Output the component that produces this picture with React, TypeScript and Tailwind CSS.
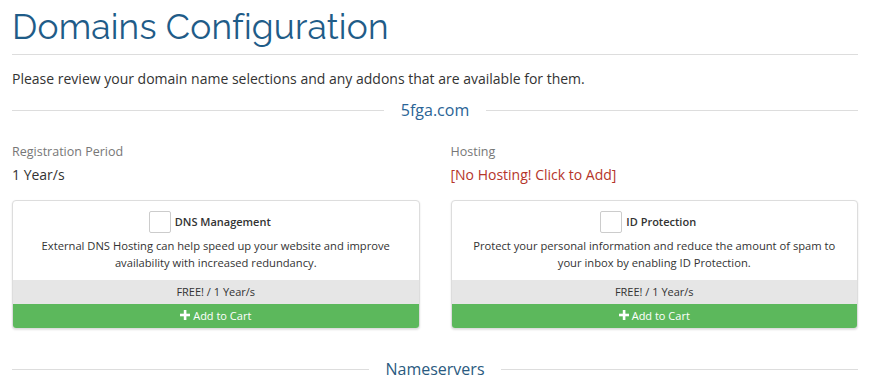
import React from "react";

function Plus() {
  return (
    <svg width="10" height="10" viewBox="0 0 10 10" className="inline-block mr-[3px] -mt-[2px]">
      <rect x="3.8" y="0" width="2.6" height="10" fill="white" />
      <rect x="0" y="3.7" width="10" height="2.6" fill="white" />
    </svg>
  );
}

function AddonCard({ title, desc }: { title: string; desc: React.ReactNode }) {
  return (
    <div className="h-[129px] border border-[#dddddd] rounded-[4px] shadow-[0_1px_2px_rgba(0,0,0,0.12)] overflow-hidden flex flex-col bg-white">
      <div className="flex-1 flex flex-col items-center pt-[10px]">
        <div className="flex items-center h-[22px] -ml-[12px]">
          <span className="w-[22px] h-[22px] border border-[#cccccc] rounded-[2px] bg-white mr-[4px]" />
          <span className="text-[11px] font-semibold text-[#333333]">{title}</span>
        </div>
        <div className="mt-[4px] text-[11.2px] leading-[17px] text-[#333333] text-center px-[16px]">{desc}</div>
      </div>
      <div className="h-[24px] bg-[#e6e6e6] text-[11px] text-[#333333] flex items-center justify-center">FREE! / 1 Year/s</div>
      <div className="h-[24px] bg-[#5cb85c] text-[11px] text-white flex items-center justify-center">
        <Plus />Add to Cart
      </div>
    </div>
  );
}

export default function App() {
  return (
    <div className="w-[882px] h-[386px] bg-white overflow-hidden pl-[12px] pr-[24px] pt-[2px] font-['Open_Sans',sans-serif] text-[#333333]">
      <div className="h-[53px] border-b border-[#dddddd]">
        <h1 className="font-['Raleway','Lato',sans-serif] text-[35.3px] leading-[44px] pt-[3px] text-[#1f5c88] font-normal tracking-[0.2px]">
          Domains Configuration
        </h1>
      </div>
      <p className="mt-[14px] text-[14px] leading-[20px] text-[#333333]">
        Please review your domain name selections and any addons that are available for them.
      </p>
      <div className="mt-[9px] flex items-center h-[24px]">
        <div className="flex-1 border-t border-[#dddddd]" />
        <div className="px-[17px] text-[16px] text-[#2a6496] leading-[24px]">5fga.com</div>
        <div className="flex-1 border-t border-[#dddddd]" />
      </div>
      <div className="mt-[20px] grid grid-cols-2 gap-x-[31px]">
        <div>
          <div className="text-[12.5px] leading-[20px] text-[#777777]">Registration Period</div>
          <div className="mt-[3px] text-[14px] leading-[20px] text-[#333333]">1 Year/s</div>
          <div className="mt-[15px]">
            <AddonCard
              title="DNS Management"
              desc={<>External DNS Hosting can help speed up your website and improve<br />availability with increased redundancy.</>}
            />
          </div>
        </div>
        <div>
          <div className="text-[12.5px] leading-[20px] text-[#777777]">Hosting</div>
          <div className="mt-[3px] text-[14px] leading-[20px] text-[#b5352a]">[No Hosting! Click to Add]</div>
          <div className="mt-[15px]">
            <AddonCard
              title="ID Protection"
              desc={<>Protect your personal information and reduce the amount of spam to<br />your inbox by enabling ID Protection.</>}
            />
          </div>
        </div>
      </div>
      <div className="mt-[28px] flex items-center h-[24px]">
        <div className="flex-1 border-t border-[#dddddd]" />
        <div className="px-[16px] text-[16px] text-[#2a5a80] leading-[24px]">Nameservers</div>
        <div className="flex-1 border-t border-[#dddddd]" />
      </div>
    </div>
  );
}
